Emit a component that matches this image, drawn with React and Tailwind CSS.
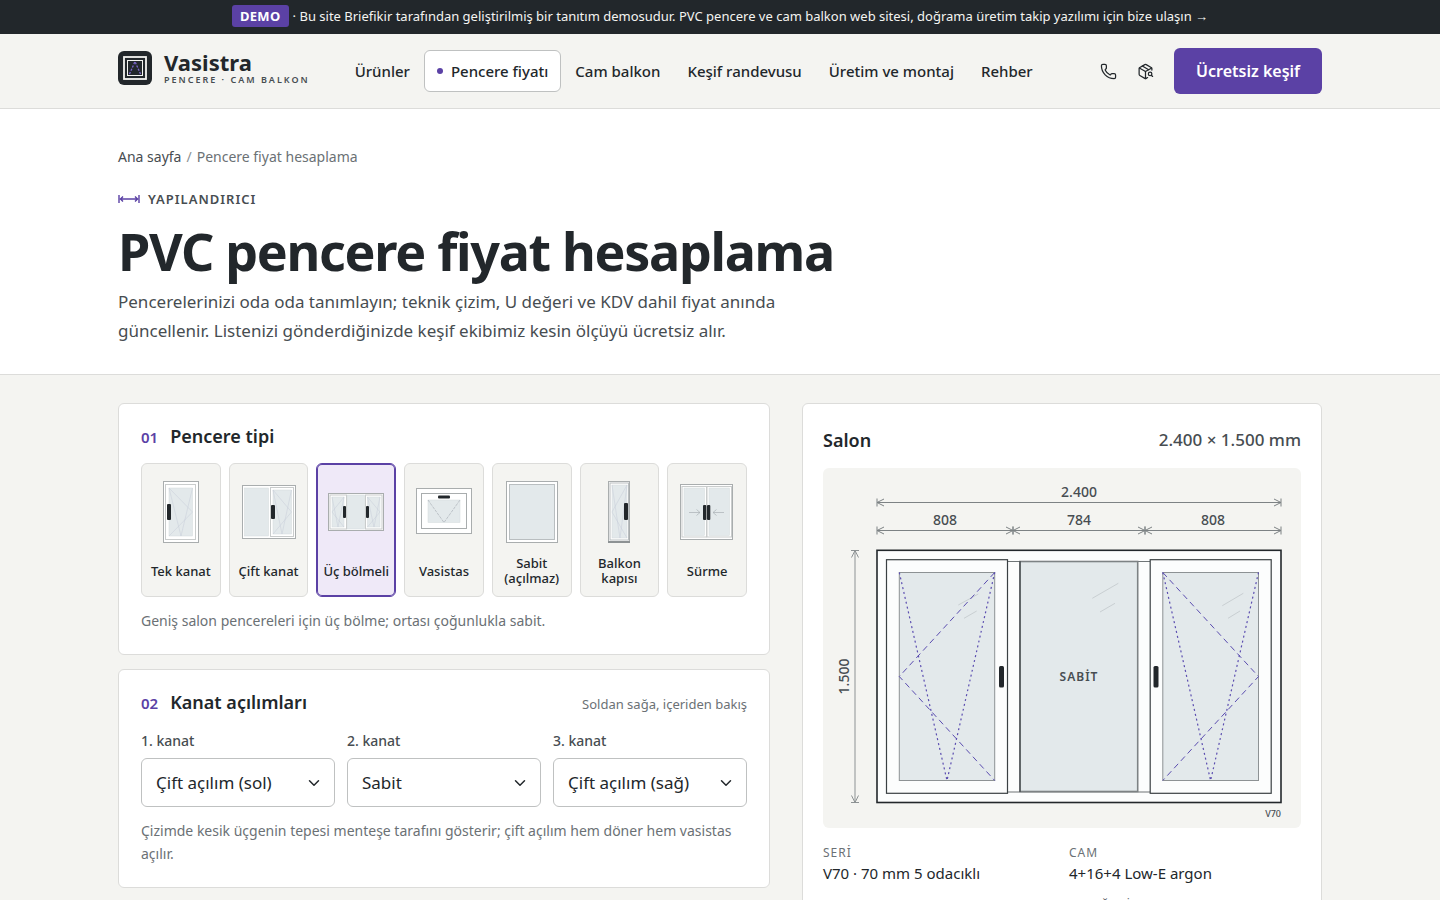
import { useState } from 'react';
import { Phone, PackageSearch, ChevronDown } from 'lucide-react';

const navLinks = ['Ürünler', 'Pencere fiyatı', 'Cam balkon', 'Keşif randevusu', 'Üretim ve montaj', 'Rehber'];

const openings = ['Çift açılım (sol)', 'Çift açılım (sağ)', 'Tek açılım (sol)', 'Tek açılım (sağ)', 'Vasistas', 'Sabit'];

const specs = [
  ['SERİ', 'V70 · 70 mm 5 odacıklı'],
  ['CAM', '4+16+4 Low-E argon'],
  ['RENK', 'Beyaz'],
  ['U DEĞERİ', '1,3 W/m²K'],
];

const Frame = ({ x, y, w, h, stroke = '#a9adae' }) => (
  <rect x={x} y={y} width={w} height={h} fill="#fff" stroke={stroke} />
);

const Glass = ({ x, y, w, h }) => (
  <rect x={x} y={y} width={w} height={h} fill="#e3e9eb" stroke="#d3d9dc" strokeWidth="0.5" />
);

const Handle = ({ x, y, w = 4, h = 16 }) => <rect x={x} y={y} width={w} height={h} rx="1" fill="#22272b" />;

const Swing = ({ d }) => <path d={d} fill="none" stroke="#c6ccd8" strokeWidth="0.5" />;

const types = [
  {
    id: 'tek',
    label: 'Tek kanat',
    hint: 'Mutfak ve yatak odaları için tek kanat.',
    art: (
      <>
        <Frame x={10.5} y={1.5} w={35} h={61} />
        <Frame x={12.5} y={4.5} w={30} h={55} stroke="#c9cccc" />
        <Glass x={16} y={8} w={23.5} h={48} />
        <Swing d="M16 8L39.5 32L16 56M16 8L28 56L39.5 8" />
        <Handle x={14} y={24} />
      </>
    ),
  },
  {
    id: 'cift',
    label: 'Çift kanat',
    hint: 'Bir sabit, bir açılır kanat.',
    art: (
      <>
        <Frame x={1.5} y={5.5} w={53} h={53} />
        <Glass x={3.5} y={8} w={24} h={48} />
        <Frame x={29.5} y={7.5} w={23} h={49} stroke="#c9cccc" />
        <Glass x={32} y={10} w={18.5} h={44} />
        <Swing d="M32 10L50.5 32L32 54M32 10L41 54L50.5 10" />
        <Handle x={30} y={25} h={14} />
      </>
    ),
  },
  {
    id: 'uc',
    label: 'Üç bölmeli',
    hint: 'Geniş salon pencereleri için üç bölme; ortası çoğunlukla sabit.',
    art: (
      <>
        <Frame x={0.5} y={13.5} w={55} h={37} />
        <Glass x={19} y={15} w={17.5} h={34} />
        <Frame x={2} y={15} w={16.5} h={34} stroke="#c9cccc" />
        <Frame x={37.5} y={15} w={16.5} h={34} stroke="#c9cccc" />
        <Glass x={4} y={17} w={12} h={30} />
        <Glass x={39.5} y={17} w={12.5} h={30} />
        <Swing d="M16 17L4 32L16 47M4 17L10 47L16 17M39.5 17L52 32L39.5 47M39.5 17L46 47L52 17" />
        <Handle x={15} y={26} w={3} h={12} />
        <Handle x={38} y={26} w={3} h={12} />
      </>
    ),
  },
  {
    id: 'vasistas',
    label: 'Vasistas',
    hint: 'Banyo ve kiler için üstten açılır.',
    art: (
      <>
        <Frame x={0.5} y={8.5} w={55} h={45} />
        <Frame x={5.5} y={13.5} w={45} h={35} />
        <Glass x={12} y={20} w={32} h={22.5} />
        <path d="M12 20L28 42.5L44 20" fill="none" stroke="#aab0b8" strokeWidth="0.7" strokeDasharray="3 1" />
        <Handle x={22} y={15.5} w={12} h={3} />
      </>
    ),
  },
  {
    id: 'sabit',
    label: 'Sabit (açılmaz)',
    hint: 'Yalnızca ışık için sabit cam.',
    art: (
      <>
        <Frame x={2.5} y={1.5} w={51} h={61} />
        <rect x={5.5} y={4.5} width={45} height={55} fill="#e3e9eb" stroke="#b9bec0" />
      </>
    ),
  },
  {
    id: 'balkon',
    label: 'Balkon kapısı',
    hint: 'Balkona açılan tam boy kapı.',
    art: (
      <>
        <Frame x={17.5} y={1.5} w={21} h={61} />
        <Frame x={19} y={3} w={18.5} h={57} stroke="#b9bec0" />
        <Glass x={21} y={5} w={15} h={53} />
        <Swing d="M36 5L21 32L36 58M21 5L29 58L36 5" />
        <Handle x={33} y={23} h={17} />
        <path d="M17 62h22" stroke="#8d9294" strokeWidth="2" />
      </>
    ),
  },
  {
    id: 'surme',
    label: 'Sürme',
    hint: 'Yer kazandıran sürme sistem.',
    art: (
      <>
        <Frame x={1.5} y={4.5} w={52} h={55} />
        <Frame x={3} y={6.5} w={24.5} h={50.5} stroke="#c9cccc" />
        <Frame x={28} y={6.5} w={24.5} h={50.5} stroke="#c9cccc" />
        <Glass x={5} y={8} w={20.5} h={47.5} />
        <Glass x={30} y={8} w={20.5} h={47.5} />
        <path
          d="M10 32.5h11M17.5 29.5l3.5 3l-3.5 3M45 32.5h-11M37.5 29.5l-3.5 3l3.5 3"
          fill="none"
          stroke="#a9b0b4"
          strokeWidth="0.7"
        />
        <Handle x={24} y={25} w={3.3} h={15} />
        <Handle x={28} y={25} w={3.3} h={15} />
      </>
    ),
  },
];

const Logo = () => (
  <svg viewBox="0 0 34 34" className="size-[34px] shrink-0" aria-hidden="true">
    <rect width="34" height="34" rx="6" fill="#22272b" />
    <rect x="6" y="6" width="22" height="22" fill="none" stroke="#f4f4f1" strokeWidth="1.8" />
    <rect x="9.5" y="9.5" width="15" height="15" fill="none" stroke="#f4f4f1" strokeWidth="1" />
    <path d="M11.5 23L17 10.5L22.5 23" fill="none" stroke="#7d66cc" strokeWidth="1.3" strokeDasharray="2.2 1.4" />
  </svg>
);

const DimensionIcon = () => (
  <svg viewBox="0 0 22 10" className="h-[10px] w-[22px]" fill="none" stroke="#5b41a5" strokeWidth="1.4" aria-hidden="true">
    <path d="M1 1v8M21 1v8M2 5h18M5 2.5L2.5 5l2.5 2.5M17 2.5L19.500 5l-2.5 2.5" />
  </svg>
);

// horizontal dimension line with arrow heads at both ends
const Dim = ({ x1, x2, y, label }) => (
  <g>
    <path
      d={`M${x1} ${y}H${x2}M${x1} ${y - 4}v8M${x2} ${y - 4}v8M${x1 + 7} ${y - 3.5}L${x1} ${y}l7 3.5M${x2 - 7} ${y - 3.5}L${x2} ${y}l-7 3.5`}
      fill="none"
      stroke="#7d8284"
    />
    <text x={(x1 + x2) / 2} y={y - 5.5} textAnchor="middle" fontSize="14" fontWeight="500" fill="#474d51">
      {label}
    </text>
  </g>
);

const Shine = ({ d }) => <path d={d} stroke="#c9cfd2" fill="none" />;

const WindowDrawing = () => (
  <svg
    viewBox="0 0 478 360"
    className="block h-auto w-full rounded-md bg-[#f4f4f1]"
    role="img"
    aria-label="Üç bölmeli pencere teknik çizimi"
  >
    <Dim x1={54} x2={458} y={34.5} label="2.400" />
    <Dim x1={54} x2={190} y={62.5} label="808" />
    <Dim x1={190} x2={322} y={62.5} label="784" />
    <Dim x1={322} x2={458} y={62.5} label="808" />
    <path d="M32 82.5V334.5M28 82.5h8M28 334.5h8M28.5 89.5L32 82.5l3.5 7M28.5 327.5L32 334.5l3.5 -7" fill="none" stroke="#8d9294" />
    <text transform="translate(26 208.5) rotate(-90)" textAnchor="middle" fontSize="14" fontWeight="500" fill="#474d51">
      1.500
    </text>

    <rect x="54" y="82.3" width="404" height="252.2" fill="#fcfdfd" stroke="#22272b" strokeWidth="1.6" />
    <path d="M184.5 93.5H327M184.5 324H327" stroke="#6f7577" strokeWidth="1.2" />
    <rect x="197" y="93.5" width="117.7" height="230" fill="#e3e9eb" stroke="#7d8284" strokeWidth="1.6" />
    <path d="M197 93v231" stroke="#3f4548" strokeWidth="1.2" />
    <Shine d="M269.3 130.3L295.3 115.3M277 144L292 135.3" />
    <text x="256" y="213" textAnchor="middle" fontSize="12" fontWeight="600" letterSpacing="1" fill="#474d51">
      SABİT
    </text>

    <rect x="63.5" y="91.7" width="121" height="233.6" fill="#fcfdfd" stroke="#3a4043" strokeWidth="1.2" />
    <rect x="76.3" y="104.5" width="95.4" height="208" fill="#e3e9eb" stroke="#8d9294" />
    <Shine d="M135.3 137L155.3 126M141 150.3L153.7 143" />
    <path d="M171.7 104.5L76.3 208.5L171.7 312.5" fill="none" stroke="#5b4db0" strokeDasharray="6 4" />
    <path d="M76.3 104.5L124 312.5L171.7 104.5" fill="none" stroke="#5b4db0" strokeWidth="1.2" strokeDasharray="2 3" />
    <rect x="176" y="198" width="5" height="21.5" rx="1.5" fill="#22272b" />

    <rect x="327.2" y="91.7" width="121" height="233.6" fill="#fcfdfd" stroke="#3a4043" strokeWidth="1.2" />
    <rect x="339.8" y="104.5" width="95.7" height="208" fill="#e3e9eb" stroke="#8d9294" />
    <Shine d="M399.3 137.7L420.3 125.3M405 150.3L417 143" />
    <path d="M339.8 104.5L435.5 208.5L339.8 312.5" fill="none" stroke="#5b4db0" strokeDasharray="6 4" />
    <path d="M339.8 104.5L387.6 312.5L435.5 104.5" fill="none" stroke="#5b4db0" strokeWidth="1.2" strokeDasharray="2 3" />
    <rect x="330.5" y="198" width="5" height="21.5" rx="1.5" fill="#22272b" />

    <text x="458" y="349" textAnchor="end" fontSize="9" fontWeight="500" fill="#474d51">
      V70
    </text>
  </svg>
);

const StepTitle = ({ no, children, note }) => (
  <div className="mb-4 flex h-[21px] items-baseline leading-[21px]">
    <span className="mr-3 text-[15px] font-semibold text-[#5b41a5]">{no}</span>
    <h2 className="text-lg leading-[21px] font-semibold">{children}</h2>
    {note && <span className="ml-auto text-[13px] text-[#6b7175]">{note}</span>}
  </div>
);

const SashSelect = ({ id, label, value, onChange }) => (
  <div>
    <label htmlFor={id} className="mb-1.5 block text-sm leading-[23px] font-medium text-[#474d51]">
      {label}
    </label>
    <div className="relative">
      <select
        id={id}
        value={value}
        onChange={(e) => onChange(e.target.value)}
        className="h-[49px] w-full appearance-none rounded-md border border-[#bfc1c1] bg-white pr-9 pl-3.5 text-[17px] text-[#22272b]"
      >
        {openings.map((o) => (
          <option key={o}>{o}</option>
        ))}
      </select>
      <ChevronDown size={18} strokeWidth={2} className="pointer-events-none absolute top-4 right-3" />
    </div>
  </div>
);

const App = () => {
  const [type, setType] = useState('uc');
  const [sashes, setSashes] = useState(['Çift açılım (sol)', 'Sabit', 'Çift açılım (sağ)']);
  const active = types.find((t) => t.id === type);

  return (
    <div className="min-h-screen bg-[#f4f4f1] font-['Noto_Sans',sans-serif] text-[#22272b]">
      <div className="flex min-h-[34px] items-center justify-center bg-[#22272b] px-6 text-[13px] text-[#f4f4f1]">
        <p>
          <span className="mr-1 rounded-[3px] bg-[#5b41a5] px-2 py-0.5 font-bold tracking-wide text-white">DEMO</span>·{' '}
          <a href="#iletisim">
            Bu site Briefikir tarafından geliştirilmiş bir tanıtım demosudur. PVC pencere ve cam balkon web sitesi, doğrama
            üretim takip yazılımı için bize ulaşın →
          </a>
        </p>
      </div>

      <header className="border-b border-[#dcdcda]">
        <div className="mx-auto flex h-[74px] max-w-[1252px] items-center px-6">
          <a href="#anasayfa" className="flex items-center gap-3 pb-1.5">
            <Logo />
            <span className="flex flex-col">
              <span className="text-[22px] leading-6 font-bold">Vasistra</span>
              <span className="text-[9px] leading-3 font-semibold tracking-[2px] whitespace-nowrap text-[#474d51]">
                PENCERE · CAM BALKON
              </span>
            </span>
          </a>
          <nav className="ml-8 flex items-center gap-px text-[15px] font-medium whitespace-nowrap">
            {navLinks.map((l) =>
              l === 'Pencere fiyatı' ? (
                <a
                  key={l}
                  href="#fiyat"
                  className="flex h-[42px] items-center gap-2 rounded-md border border-[#bfc1c1] bg-white px-3"
                >
                  <span className="size-1.5 rounded-full bg-[#5b41a5]" />
                  {l}
                </a>
              ) : (
                <a key={l} href="#menu" className="flex h-[42px] items-center px-[13px]">
                  {l}
                </a>
              )
            )}
          </nav>
          <div className="ml-auto flex items-center">
            <a href="#telefon" aria-label="Telefon" className="flex h-[42px] w-[37px] items-center justify-center">
              <Phone size={17} strokeWidth={1.75} />
            </a>
            <a href="#takip" aria-label="Sipariş takip" className="flex h-[42px] w-[37px] items-center justify-center">
              <PackageSearch size={17} strokeWidth={1.75} />
            </a>
            <button className="ml-2.5 h-[46px] rounded-md bg-[#5b41a5] px-[22px] text-base font-semibold whitespace-nowrap text-white">
              Ücretsiz keşif
            </button>
          </div>
        </div>
      </header>

      <section className="border-b border-[#dcdcda] bg-white">
        <div className="mx-auto max-w-[1252px] px-6 pt-9 pb-[29px]">
          <div className="flex gap-[5px] text-sm leading-6">
            <a href="#anasayfa" className="text-[#474d51]">
              Ana sayfa
            </a>
            <span className="text-[#8d9294]">/</span>
            <span className="text-[#6b7175]">Pencere fiyat hesaplama</span>
          </div>
          <p className="mt-[18px] flex items-center gap-2 text-[13px] leading-6 font-semibold tracking-[1px] text-[#474d51]">
            <DimensionIcon />
            YAPILANDIRICI
          </p>
          <h1 className="mt-2 text-[52px] leading-[64px] font-bold tracking-tight">PVC pencere fiyat hesaplama</h1>
          <p className="mt-1 max-w-[700px] text-[17px] leading-[29px] text-[#474d51]">
            Pencerelerinizi oda oda tanımlayın; teknik çizim, U değeri ve KDV dahil fiyat anında güncellenir. Listenizi
            gönderdiğinizde keşif ekibimiz kesin ölçüyü ücretsiz alır.
          </p>
        </div>
      </section>

      <main className="mx-auto grid max-w-[1252px] grid-cols-[minmax(0,1fr)_520px] items-start gap-8 px-6 pt-7 pb-16">
        <div className="flex flex-col gap-3.5">
          <section className="rounded-md border border-[#dcdcda] bg-white p-[22px]">
            <StepTitle no="01">Pencere tipi</StepTitle>
            <div className="grid grid-cols-7 gap-2">
              {types.map((t) => (
                <button
                  key={t.id}
                  aria-pressed={t.id === type}
                  onClick={() => setType(t.id)}
                  className={
                    'flex flex-col items-center gap-3 rounded-md border pt-4 pb-2.5 ' +
                    (t.id === type
                      ? 'border-[#5b41a5] bg-[#efe9f8] ring-1 ring-[#5b41a5] ring-inset'
                      : 'border-[#dcdcda] bg-[#f4f4f1]')
                  }
                >
                  <svg viewBox="0 0 56 64" className="h-16 w-14" aria-hidden="true">
                    {t.art}
                  </svg>
                  <span className="flex h-[30px] items-center text-[13px] leading-[15px] font-medium">{t.label}</span>
                </button>
              ))}
            </div>
            <p className="mt-3 text-sm leading-[23px] text-[#6b7175]">{active.hint}</p>
          </section>

          <section className="rounded-md border border-[#dcdcda] bg-white p-[22px]">
            <StepTitle no="02" note="Soldan sağa, içeriden bakış">
              Kanat açılımları
            </StepTitle>
            <div className="grid grid-cols-3 gap-3">
              {sashes.map((s, i) => (
                <SashSelect
                  key={i}
                  id={`kanat-${i + 1}`}
                  label={`${i + 1}. kanat`}
                  value={s}
                  onChange={(v) => setSashes(sashes.map((old, j) => (j === i ? v : old)))}
                />
              ))}
            </div>
            <p className="mt-3 text-sm leading-[23px] text-[#6b7175]">
              Çizimde kesik üçgenin tepesi menteşe tarafını gösterir; çift açılım hem döner hem vasistas açılır.
            </p>
          </section>
        </div>

        <aside className="rounded-md border border-[#dcdcda] bg-white p-5">
          <div className="mb-3 flex items-center justify-between leading-8">
            <h2 className="text-lg leading-8 font-semibold">Salon</h2>
            <span className="text-[17px] font-medium text-[#474d51]">2.400 × 1.500 mm</span>
          </div>
          <WindowDrawing />
          <dl className="mt-4 grid grid-cols-2 gap-x-3.5 gap-y-3">
            {specs.map(([k, v]) => (
              <div key={k}>
                <dt className="text-[12px] leading-[18px] tracking-[1px] text-[#6b7175]">{k}</dt>
                <dd className="text-[15px] leading-[23px]">{v}</dd>
              </div>
            ))}
          </dl>
        </aside>
      </main>
    </div>
  );
};

export default App;
